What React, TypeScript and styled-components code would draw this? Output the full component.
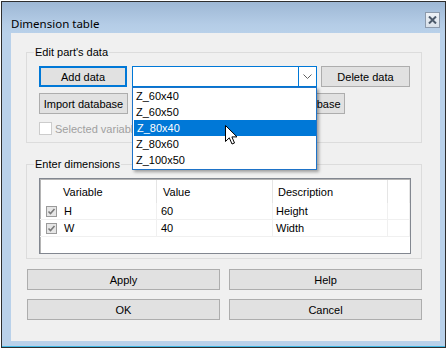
import styled, { createGlobalStyle } from 'styled-components'

const GlobalStyle = createGlobalStyle`
  html, body {
    margin: 0;
    padding: 0;
    background: #ffffff;
  }
  body {
    font-family: "Liberation Sans", Arial, sans-serif;
    font-size: 11px;
    color: #000;
  }
`

const Window = styled.div`
  margin: 1px 0 0 1px;
  width: 445px;
  height: 347px;
  box-sizing: border-box;
  border: 1px solid #2e2e2e;
  background: linear-gradient(#9eb8d5 0px, #b4cce6 22px, #b9d1ea 32px, #b9d1ea);
  box-shadow: inset 0 -1px 0 #41b8e4;
  padding: 0 5px 0 9px;
  display: flex;
  flex-direction: column;
`

const TitleBar = styled.div`
  height: 31px;
  flex: none;
  display: flex;
  justify-content: space-between;
  align-items: flex-start;
`

const TitleText = styled.div`
  font-family: "Noto Sans", "Segoe UI", sans-serif;
  font-size: 11.5px;
  line-height: 16px;
  margin-top: 14px;
`

const CloseButton = styled.div`
  margin-top: 10px;
  width: 15px;
  height: 16px;
  box-sizing: border-box;
  border: 1px solid #8c9aac;
  background: linear-gradient(#eef2f7, #d9e1ea);
  display: flex;
  align-items: center;
  justify-content: center;
`

const Client = styled.div`
  flex: 1;
  margin-bottom: 6px;
  background: #f0f0f0;
  padding: 19px 0 0 15px;
  box-sizing: border-box;
`

const GroupBox = styled.div<{ $h: number }>`
  position: relative;
  width: 396px;
  height: ${p => p.$h}px;
  box-sizing: border-box;
  border: 1px solid #dcdcdc;
  padding: 13px 0 0 12px;
  & + & {
    margin-top: 21px;
  }
`

const Legend = styled.span`
  position: absolute;
  top: -8px;
  left: 7px;
  padding: 0 1px;
  background: #f0f0f0;
  line-height: 14px;
`

const Row = styled.div<{ $gap: number; $top?: number }>`
  display: flex;
  align-items: center;
  gap: ${p => p.$gap}px;
  margin-top: ${p => p.$top ?? 0}px;
`

const Button = styled.div<{ $w: number; $focused?: boolean }>`
  width: ${p => p.$w}px;
  height: 21px;
  box-sizing: border-box;
  border: ${p => (p.$focused ? '2px solid #0078d7' : '1px solid #adadad')};
  background: #e1e1e1;
  display: flex;
  align-items: center;
  justify-content: center;
  white-space: nowrap;
  overflow: hidden;
  flex: none;
`

const ComboWrap = styled.div`
  position: relative;
  width: 185px;
  height: 21px;
  flex: none;
  margin: 0 4px 0 5px;
`

const ComboField = styled.div`
  height: 100%;
  box-sizing: border-box;
  border: 1px solid #0078d7;
  background: #fff;
  display: flex;
  justify-content: flex-end;
`

const ComboArrow = styled.div`
  width: 17px;
  border-left: 1px solid #0078d7;
  display: flex;
  align-items: center;
  justify-content: center;
`

const DropList = styled.div`
  position: absolute;
  z-index: 10;
  top: 21px;
  left: 0;
  width: 185px;
  height: 83px;
  box-sizing: border-box;
  border: 1px solid #1e73c8;
  background: #fff;
  box-shadow: 2px 2px 3px rgba(0, 0, 0, 0.35);
`

const DropItem = styled.div<{ $selected?: boolean }>`
  height: 16px;
  line-height: 16px;
  padding-left: 3px;
  margin-left: ${p => (p.$selected ? 1 : 0)}px;
  background: ${p => (p.$selected ? '#0078d7' : 'transparent')};
  color: ${p => (p.$selected ? '#fff' : '#000')};
`

const Cursor = styled.svg`
  position: absolute;
  left: 92px;
  top: 37px;
`

const CheckRow = styled.div`
  display: flex;
  align-items: center;
  gap: 3px;
  margin-top: 8px;
  width: 93px;
  overflow: hidden;
  color: #a0a0a0;
  white-space: nowrap;
`

const CheckBox = styled.div`
  width: 13px;
  height: 13px;
  flex: none;
  box-sizing: border-box;
  border: 1px solid #cccccc;
  background: #fff;
`

const ListView = styled.div`
  width: 372px;
  height: 76px;
  box-sizing: border-box;
  border: 1px solid #828790;
  box-shadow: inset 1px 1px 0 #b4b4b4;
  background: #fff;
  display: grid;
  grid-template-columns: 117px 116px 115px 1fr;
  grid-template-rows: 24px 17px 17px 1fr;
  overflow: hidden;
`

const HeaderCell = styled.div<{ $pad: number }>`
  padding-left: ${p => p.$pad}px;
  display: flex;
  align-items: center;
  border-right: 1px solid #e5e5e5;
  margin-top: 1px;
`

const Cell = styled.div<{ $pad: number }>`
  padding-left: ${p => p.$pad}px;
  display: flex;
  align-items: center;
  gap: 7px;
  border-right: 1px solid #f0f0f0;
  border-bottom: 1px solid #f0f0f0;
`

const ButtonGrid = styled.div`
  display: grid;
  grid-template-columns: 193px 193px;
  gap: 9px;
  margin: 10px 0 0 1px;
`

const items = ['Z_60x40', 'Z_60x50', 'Z_80x40', 'Z_80x60', 'Z_100x50']

const rows = [
  { name: 'H', value: '60', desc: 'Height' },
  { name: 'W', value: '40', desc: 'Width' },
]

function GrayCheck() {
  return (
    <svg width="11" height="11" viewBox="0 0 11 11">
      <rect x="0.5" y="0.5" width="10" height="10" fill="#e6e6e6" stroke="#9a9a9a" />
      <path d="M2.5 5.5 L4.5 7.5 L8.5 3" fill="none" stroke="#7a7a7a" strokeWidth="1.6" />
    </svg>
  )
}

export default function App() {
  return (
    <>
      <GlobalStyle />
      <Window>
        <TitleBar>
          <TitleText>Dimension table</TitleText>
          <CloseButton>
            <svg width="9" height="8" viewBox="0 0 9 8">
              <path d="M1 0.5 L8 7.5 M8 0.5 L1 7.5" stroke="#4c5a6b" strokeWidth="2" />
            </svg>
          </CloseButton>
        </TitleBar>
        <Client>
          <GroupBox $h={91}>
            <Legend>Edit part's data</Legend>
            <Row $gap={0}>
              <Button $w={88} $focused>Add data</Button>
              <ComboWrap>
                <ComboField>
                  <ComboArrow>
                    <svg width="9" height="5" viewBox="0 0 9 5">
                      <path d="M0.5 0.5 L4.5 4.5 L8.5 0.5" fill="none" stroke="#606060" />
                    </svg>
                  </ComboArrow>
                </ComboField>
                <DropList>
                  {items.map((it, i) => (
                    <DropItem key={it} $selected={i === 2}>{it}</DropItem>
                  ))}
                  <Cursor width="13" height="20" viewBox="0 0 13 20">
                    <path
                      d="M0.5 0.5 L0.5 16.5 L4.3 12.8 L7 19 L9.5 18 L6.9 11.9 L12 11.9 Z"
                      fill="#fff"
                      stroke="#000"
                      strokeLinejoin="round"
                    />
                  </Cursor>
                </DropList>
              </ComboWrap>
              <Button $w={89}>Delete data</Button>
            </Row>
            <Row $gap={128} $top={6}>
              <Button $w={89}>Import database</Button>
              <Button $w={89}>Export database</Button>
            </Row>
            <CheckRow>
              <CheckBox />
              <span>Selected variable only</span>
            </CheckRow>
          </GroupBox>
          <GroupBox $h={95}>
            <Legend>Enter dimensions</Legend>
            <ListView>
              <HeaderCell $pad={23}>Variable</HeaderCell>
              <HeaderCell $pad={6}>Value</HeaderCell>
              <HeaderCell $pad={5}>Description</HeaderCell>
              <HeaderCell $pad={0} />
              {rows.map(r => [
                <Cell $pad={6} key={r.name + 'n'}>
                  <GrayCheck />
                  {r.name}
                </Cell>,
                <Cell $pad={4} key={r.name + 'v'}>{r.value}</Cell>,
                <Cell $pad={3} key={r.name + 'd'}>{r.desc}</Cell>,
                <Cell $pad={0} key={r.name + 'e'} />,
              ])}
            </ListView>
          </GroupBox>
          <ButtonGrid>
            <Button $w={193}>Apply</Button>
            <Button $w={193}>Help</Button>
            <Button $w={193}>OK</Button>
            <Button $w={193}>Cancel</Button>
          </ButtonGrid>
        </Client>
      </Window>
    </>
  )
}
